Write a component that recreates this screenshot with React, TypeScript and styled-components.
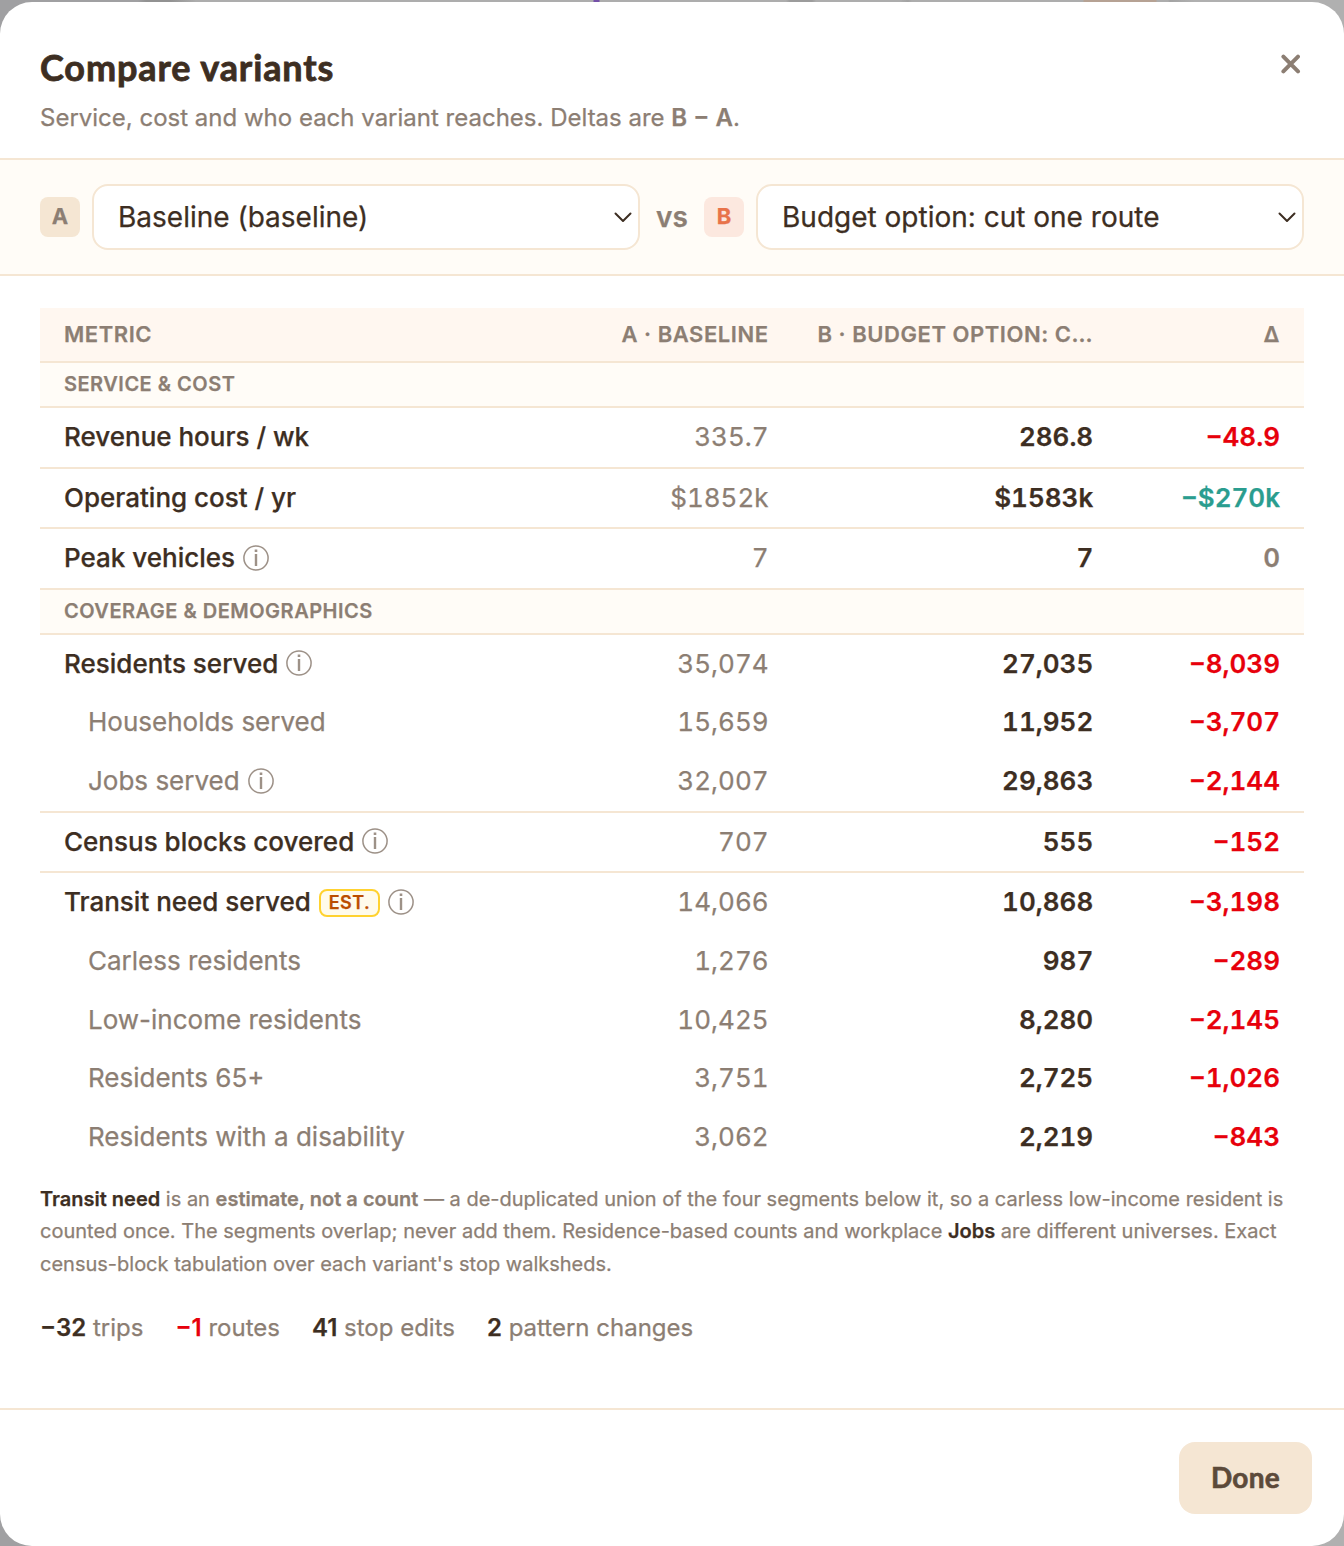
import React from "react";
import styled, { createGlobalStyle, css } from "styled-components";

const ink = "#3d2e22";
const muted = "#8c7e73";
const line = "#f5e6d3";
const cream = "#fffcf7";

const Global = createGlobalStyle`
  * { box-sizing: border-box; }
  body {
    margin: 0;
    height: 1546px;
    overflow: hidden;
    font-family: Inter, "Liberation Sans", sans-serif;
    color: ${ink};
    -webkit-text-stroke: 0.25px currentColor;
    background: linear-gradient(90deg, #a0a0a2 0 138px, #929292 146px 170px, #a6a6a6 190px, #adadad 196px 593px,
      #7450a8 594px 599px, #adadad 600px 786px, #9c9c9c 790px 812px, #adadad 816px 900px, #a3a3a3 908px, #adadad 912px 1083px,
      #b6a294 1084px 1156px, #adadad 1157px 1168px, #a3a3a3 1170px, #b0b0b0 1194px);
  }
`;

const Dialog = styled.main`
  width: 1344px;
  height: 1546px;
  padding-top: 2px;
  display: flex;
`;

const Panel = styled.section`
  flex: 1;
  display: flex;
  flex-direction: column;
  background: #fff;
  border-radius: 32px;
  overflow: hidden;
`;

const Header = styled.header`
  height: 158px;
  padding: 42px 40px 0;
  display: flex;
  justify-content: space-between;
  border-bottom: 2px solid ${line};
`;

const Title = styled.h1`
  margin: 0;
  font: 700 36px/46px Lato, sans-serif;
  letter-spacing: 0.9px;
  white-space: nowrap;
  -webkit-text-stroke: 0.8px ${ink};
`;

const Subtitle = styled.p`
  margin: 10px 0 0;
  font-size: 24px;
  line-height: 36px;
  color: ${muted};
  b { font-weight: 600; }
`;

const Close = styled.button`
  width: 20px;
  height: 20px;
  margin: 10px 3px 0 0;
  padding: 0;
  border: 0;
  background: none;
  svg { display: block; }
`;

const Picker = styled.div`
  height: 116px;
  padding: 0 40px;
  display: flex;
  align-items: center;
  background: ${cream};
  border-bottom: 2px solid ${line};
`;

const Tag = styled.span<{ $accent?: boolean }>`
  width: 40px;
  height: 40px;
  margin-right: 12px;
  border-radius: 8px;
  display: grid;
  place-items: center;
  font-size: 22px;
  line-height: 36px;
  padding-bottom: 2px;
  font-weight: 700;
  color: ${(p) => (p.$accent ? "#e8734a" : muted)};
  background: ${(p) => (p.$accent ? "#fce8df" : line)};
`;

const Select = styled.div`
  flex: 1;
  height: 66px;
  padding: 0 6px 0 24px;
  display: flex;
  align-items: center;
  justify-content: space-between;
  border: 2px solid ${line};
  border-radius: 16px;
  background: #fff;
  font-size: 28px;
`;

const Versus = styled.span`
  width: 64px;
  text-align: center;
  font-size: 28px;
  font-weight: 600;
  color: ${muted};
`;

const Body = styled.div`
  height: 1132px;
  padding: 32px 40px 0;
`;

const columns = css`
  display: grid;
  grid-template-columns: 1fr 196px 324.6px 186.8px;
`;

const HeadRow = styled.div`
  ${columns}
  height: 53px;
  background: #fff7f0;
  font-size: 22px;
  font-weight: 600;
  line-height: 52px;
  letter-spacing: 0.55px;
  color: ${muted};
`;

const SectionRow = styled.div`
  height: 45.1px;
  padding-left: 24px;
  border-top: 2px solid ${line};
  background: ${cream};
  font-size: 20px;
  font-weight: 600;
  line-height: 42px;
  letter-spacing: 0.5px;
  color: ${muted};
`;

const Row = styled.div<{ $sub?: boolean }>`
  ${columns}
  height: ${(p) => (p.$sub ? "58.7px" : "60.55px")};
  border-top: ${(p) => (p.$sub ? "0" : `2px solid ${line}`)};
  font-size: 26px;
  line-height: 58px;
`;

const Label = styled.div<{ $sub?: boolean }>`
  padding-left: ${(p) => (p.$sub ? 48 : 24)}px;
  display: flex;
  align-items: flex-start;
  white-space: nowrap;
  font-weight: ${(p) => (p.$sub ? 400 : 500)};
  color: ${(p) => (p.$sub ? muted : "inherit")};
`;

type Tone = "plain" | "strong" | "bad" | "good" | "zero";
const tones: Record<Tone, string> = {
  plain: muted,
  strong: ink,
  bad: "#e7000b",
  good: "#2a9d8f",
  zero: muted,
};

const Cell = styled.div<{ $tone?: Tone }>`
  padding: 0 24px;
  text-align: right;
  white-space: nowrap;
  ${(p) =>
    p.$tone &&
    css`
      color: ${tones[p.$tone]};
      font-weight: ${p.$tone === "plain" ? 400 : 600};
      font-variant-numeric: tabular-nums;
    `}
`;

const HeadLabel = styled.div`
  padding-left: 24px;
`;

const Est = styled.span`
  width: 61px;
  height: 28px;
  margin: 16px 0 0 8px;
  border: 2px solid #ffd230;
  border-radius: 8px;
  background: #fffbeb;
  color: #bb4d00;
  font-size: 18px;
  font-weight: 600;
  line-height: 24px;
  letter-spacing: 0.45px;
  text-align: center;
`;

const InfoSvg = styled.svg`
  flex: none;
  margin: 15.5px 0 0 8px;
  opacity: 0.85;
`;

const Note = styled.p`
  margin: 16px 0 0;
  font-size: 20px;
  line-height: 32.5px;
  color: ${muted};
  white-space: nowrap;
  b { font-weight: 600; }
`;

const Dark = styled.b`
  color: ${ink};
`;

const Stats = styled.div`
  margin-top: 30px;
  display: flex;
  gap: 32px;
  font-size: 24px;
  line-height: 36px;
  color: ${muted};
`;

const Count = styled.b<{ $bad?: boolean }>`
  font-weight: 600;
  color: ${(p) => (p.$bad ? "#e7000b" : ink)};
`;

const Footer = styled.footer`
  flex: 1;
  padding: 32px;
  border-top: 2px solid ${line};
  display: flex;
  justify-content: flex-end;
`;

const Done = styled.button`
  width: 133px;
  height: 72px;
  padding: 0 0 2px;
  border: 0;
  border-radius: 16px;
  background: ${line};
  color: #5c4a3a;
  font: 700 28px/70px Lato, sans-serif;
  letter-spacing: 0.3px;
  -webkit-text-stroke: 0.6px #5c4a3a;
`;

const Info = () => (
  <InfoSvg width="26" height="26" viewBox="0 0 26 26" fill="none" stroke={muted}>
    <circle cx="13" cy="13" r="12.1" strokeWidth="1.5" />
    <path d="M13 9V21" strokeWidth="2.4" />
    <path d="M13 4.5V7" strokeWidth="2.6" />
  </InfoSvg>
);

const Chevron = () => (
  <svg width="18" height="12" viewBox="0 0 18 12" fill="none" stroke={ink} strokeWidth="2" strokeLinecap="round" strokeLinejoin="round">
    <path d="M1.5 2.5 9 10 16.5 2.5" />
  </svg>
);

interface Metric {
  name: string;
  a: string;
  b: string;
  d: string;
  tone?: Tone;
  sub?: boolean;
  info?: boolean;
  est?: boolean;
}

const service: Metric[] = [
  { name: "Revenue hours / wk", a: "335.7", b: "286.8", d: "−48.9" },
  { name: "Operating cost / yr", a: "$1852k", b: "$1583k", d: "−$270k", tone: "good" },
  { name: "Peak vehicles", a: "7", b: "7", d: "0", tone: "zero", info: true },
];

const coverage: Metric[] = [
  { name: "Residents served", a: "35,074", b: "27,035", d: "−8,039", info: true },
  { name: "Households served", a: "15,659", b: "11,952", d: "−3,707", sub: true },
  { name: "Jobs served", a: "32,007", b: "29,863", d: "−2,144", sub: true, info: true },
  { name: "Census blocks covered", a: "707", b: "555", d: "−152", info: true },
  { name: "Transit need served", a: "14,066", b: "10,868", d: "−3,198", est: true, info: true },
  { name: "Carless residents", a: "1,276", b: "987", d: "−289", sub: true },
  { name: "Low-income residents", a: "10,425", b: "8,280", d: "−2,145", sub: true },
  { name: "Residents 65+", a: "3,751", b: "2,725", d: "−1,026", sub: true },
  { name: "Residents with a disability", a: "3,062", b: "2,219", d: "−843", sub: true },
];

const Rows = ({ items }: { items: Metric[] }) => (
  <>
    {items.map((m) => (
      <Row key={m.name} $sub={m.sub}>
        <Label $sub={m.sub}>
          {m.name}
          {m.est && <Est>EST.</Est>}
          {m.info && <Info />}
        </Label>
        <Cell $tone="plain">{m.a}</Cell>
        <Cell $tone="strong">{m.b}</Cell>
        <Cell $tone={m.tone ?? "bad"}>{m.d}</Cell>
      </Row>
    ))}
  </>
);

export default function App() {
  return (
    <>
      <Global />
      <Dialog>
        <Panel>
          <Header>
            <div>
              <Title>Compare variants</Title>
              <Subtitle>
                Service, cost and who each variant reaches. Deltas are <b>B − A</b>.
              </Subtitle>
            </div>
            <Close aria-label="Close">
              <svg width="20" height="20" viewBox="0 0 20 20" stroke={muted} strokeWidth="4" strokeLinecap="round">
                <path d="M2.4 2.6 17 17.4M17 2.6 2.4 17.4" />
              </svg>
            </Close>
          </Header>
          <Picker>
            <Tag>A</Tag>
            <Select>
              Baseline (baseline)
              <Chevron />
            </Select>
            <Versus>vs</Versus>
            <Tag $accent>B</Tag>
            <Select>
              Budget option: cut one route
              <Chevron />
            </Select>
          </Picker>
          <Body>
            <HeadRow>
              <HeadLabel>METRIC</HeadLabel>
              <Cell>A · BASELINE</Cell>
              <Cell>B · BUDGET OPTION: C…</Cell>
              <Cell>Δ</Cell>
            </HeadRow>
            <SectionRow>SERVICE &amp; COST</SectionRow>
            <Rows items={service} />
            <SectionRow>COVERAGE &amp; DEMOGRAPHICS</SectionRow>
            <Rows items={coverage} />
            <Note>
              <Dark>Transit need</Dark> is an <b>estimate, not a count</b> — a de-duplicated union of the four segments
              below it, so a carless low-income resident is
              <br />
              counted once. The segments overlap; never add them. Residence-based counts and workplace <Dark>Jobs</Dark>{" "}
              are different universes. Exact
              <br />
              census-block tabulation over each variant's stop walksheds.
            </Note>
            <Stats>
              <span><Count>−32</Count> trips</span>
              <span><Count $bad>−1</Count> routes</span>
              <span><Count>41</Count> stop edits</span>
              <span><Count>2</Count> pattern changes</span>
            </Stats>
          </Body>
          <Footer>
            <Done>Done</Done>
          </Footer>
        </Panel>
      </Dialog>
    </>
  );
}
